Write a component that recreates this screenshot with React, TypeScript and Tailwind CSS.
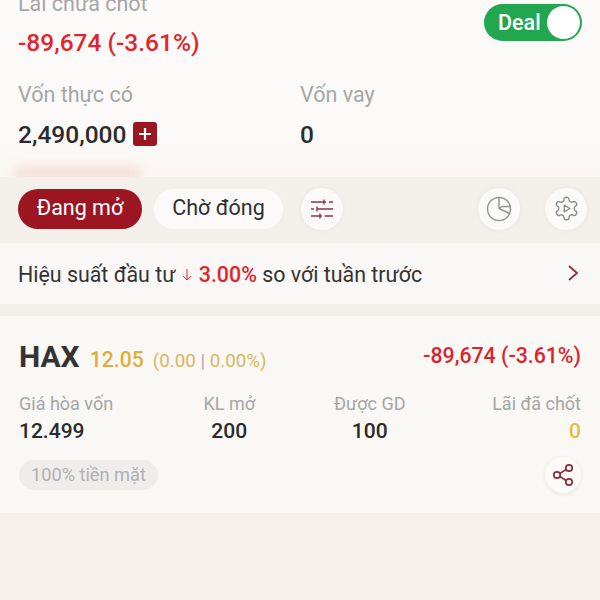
import React from "react";

function Circle({ children, className = "" }: { children: React.ReactNode; className?: string }) {
  return (
    <div className={`w-[42px] h-[42px] rounded-full bg-[#fbfaf9] flex items-center justify-center shadow-[0_0_4px_rgba(120,100,90,0.08)] ${className}`}>
      {children}
    </div>
  );
}

function Stat({ label, value, align, valueClass = "text-[#2b2b2b]" }: { label: string; value: string; align: string; valueClass?: string }) {
  return (
    <div className={`flex flex-col ${align}`}>
      <span className="text-[18px] leading-[24px] text-[#a6a6a6]">{label}</span>
      <span className={`text-[21px] leading-[30px] font-medium ${valueClass}`}>{value}</span>
    </div>
  );
}

export default function App() {
  return (
    <div className="w-[600px] h-[600px] overflow-hidden bg-[#f5f0ea] font-['Roboto',sans-serif] text-[#2b2b2b]">
      <div className="relative h-[177px] bg-gradient-to-b from-[#fbfaf9] from-[75%] to-[#fbf6f2] px-[18px]">
        <div className="flex justify-between items-start">
          <div className="mt-[-8px]">
            <div className="text-[21.5px] leading-[24px] text-[#a6a6a6]">Lãi chưa chốt</div>
            <div className="mt-[11px] text-[24.5px] leading-[32px] font-medium text-[#e2242c]">-89,674 (-3.61%)</div>
          </div>
          <div className="mt-[4px] w-[98px] h-[37px] rounded-full bg-[#22a64f] flex items-center justify-between pl-[14px] pr-[2px]">
            <span className="text-[21.5px] font-medium text-white pt-[1px]">Deal</span>
            <span className="w-[33px] h-[33px] rounded-full bg-white" />
          </div>
        </div>
        <div className="mt-[22px] grid grid-cols-[282px_1fr]">
          <div>
            <div className="text-[21.5px] leading-[28px] text-[#a6a6a6]">Vốn thực có</div>
            <div className="mt-[10px] flex items-center gap-[7px]">
              <span className="text-[24.5px] leading-[32px] font-medium text-[#2b2b2b]">2,490,000</span>
              <span className="w-[24px] h-[24px] rounded-[3px] bg-[#9c1622] flex items-center justify-center mb-[3px]">
                <svg width="14" height="14" viewBox="0 0 14 14"><path d="M7 1v12M1 7h12" stroke="#fff" strokeWidth="2.2" /></svg>
              </span>
            </div>
          </div>
          <div>
            <div className="text-[21.5px] leading-[28px] text-[#a6a6a6]">Vốn vay</div>
            <div className="mt-[10px] text-[24.5px] leading-[32px] font-medium text-[#2b2b2b]">0</div>
          </div>
        </div>
        <div className="absolute left-[15px] top-[168px] w-[125px] h-[10px] bg-[#e3a9a9] opacity-40 blur-[6px]" />
      </div>

      <div className="relative h-[66px] bg-[#f3efeb] flex items-center pl-[18px] pr-[13px] pb-[3px]">
        <div className="w-[124px] h-[40px] rounded-full bg-[#9c1622] text-white text-[21.5px] flex items-center justify-center">Đang mở</div>
        <div className="ml-[12px] w-[129px] h-[40px] rounded-full bg-[#fbfaf9] text-[#2f2f2f] text-[21.5px] flex items-center justify-center">Chờ đóng</div>
        <Circle className="ml-[18px]">
          <svg width="24" height="22" viewBox="0 0 24 22" fill="none" stroke="#8f3246" strokeWidth="1.4">
            <path d="M1 4h15M14 1.500v5M19 4h4M1 11h3M7 8.500v5M7 11h16M1 18h11M10 15.500v5M15 18h8" />
          </svg>
        </Circle>
        <Circle className="ml-auto">
          <svg width="26" height="26" viewBox="0 0 26 26" fill="none" stroke="#949494" strokeWidth="1.4" strokeLinejoin="round">
            <circle cx="13" cy="13" r="11.500" />
            <path d="M13 1.500 13 12.500 23.500 17.500M13 12.500 16 10.500 24.300 10.500" />
          </svg>
        </Circle>
        <Circle className="ml-[25px]">
          <svg width="27" height="27" viewBox="0 0 24 24" fill="none" stroke="#8a8a8a" strokeWidth="1.200" strokeLinejoin="round">
            <path d="M12.220 2h-.44a2 2 0 0 0-2 2v.18a2 2 0 0 1-1 1.730l-.43.25a2 2 0 0 1-2 0l-.15-.08a2 2 0 0 0-2.730.73l-.22.38a2 2 0 0 0 .73 2.730l.15.1a2 2 0 0 1 1 1.720v.51a2 2 0 0 1-1 1.740l-.15.09a2 2 0 0 0-.73 2.730l.22.38a2 2 0 0 0 2.730.73l.15-.08a2 2 0 0 1 2 0l.43.25a2 2 0 0 1 1 1.730V20a2 2 0 0 0 2 2h.44a2 2 0 0 0 2-2v-.18a2 2 0 0 1 1-1.730l.43-.25a2 2 0 0 1 2 0l.15.08a2 2 0 0 0 2.730-.73l.22-.39a2 2 0 0 0-.73-2.730l-.15-.08a2 2 0 0 1-1-1.740v-.5a2 2 0 0 1 1-1.740l.15-.09a2 2 0 0 0 .73-2.730l-.22-.38a2 2 0 0 0-2.730-.73l-.15.08a2 2 0 0 1-2 0l-.43-.25a2 2 0 0 1-1-1.730V4a2 2 0 0 0-2-2z" />
            <path d="M10 9v6l5-3Z" />
          </svg>
        </Circle>
      </div>

      <div className="h-[61px] bg-[#faf8f6] flex items-center justify-between pl-[18px] pr-[21px]">
        <div className="text-[21.4px] text-[#333] flex items-center whitespace-pre pt-[3px]">
          <span>Hiệu suất đầu tư </span>
          <svg width="12" height="14" viewBox="0 0 12 14" fill="none" stroke="#e2242c" strokeWidth="1" className="mr-[6px]">
            <path d="M6 1v11M2 8l4 4 4-4" />
          </svg>
          <span className="font-medium text-[#e2242c]">3.00%</span>
          <span> so với tuần trước</span>
        </div>
        <svg width="12" height="18" viewBox="0 0 12 18" fill="none" stroke="#8f2a3c" strokeWidth="1.8" className="mb-[2px]"><path d="M2 2l8 7-8 7" /></svg>
      </div>

      <div className="h-[12px] bg-[#f3f0ec]" />

      <div className="h-[197px] bg-[#f9f8f4] px-[19px] pt-[22px]">
        <div className="flex items-center justify-between h-[36px]">
          <div className="flex items-baseline">
            <span className="text-[30px] font-bold text-[#333]">HAX</span>
            <span className="ml-[10px] text-[21.200px] font-medium text-[#e0ae3c]">12.05</span>
            <span className="ml-[9px] text-[18.800px] text-[#dcb560]">(0.00 <span className="text-[#aaa]">|</span> 0.00%)</span>
          </div>
          <span className="text-[21.300px] font-medium text-[#d9242f]">-89,674 (-3.61%)</span>
        </div>
        <div className="mt-[18px] grid grid-cols-4">
          <Stat label="Giá hòa vốn" value="12.499" align="items-start" />
          <div className="flex justify-start pl-[44px]"><Stat label="KL mở" value="200" align="items-center" /></div>
          <div className="flex justify-start pl-[34px]"><Stat label="Được GD" value="100" align="items-center" /></div>
          <Stat label="Lãi đã chốt" value="0" align="items-end" valueClass="text-[#e5bd3f]" />
        </div>
        <div className="mt-[11px] flex items-center justify-between">
          <span className="h-[30px] px-[12px] rounded-full bg-[#efedeb] text-[18.200px] text-[#b0b0b0] flex items-center">100% tiền mặt</span>
          <div className="w-[36px] h-[36px] rounded-full bg-[#fbfaf9] flex items-center justify-center shadow-[0_1px_4px_rgba(90,70,60,0.12)]">
            <svg width="24" height="24" viewBox="0 0 24 24" fill="none" stroke="#8a2a3a" strokeWidth="1.700">
              <circle cx="18" cy="5" r="3.200" /><circle cx="6" cy="12" r="3.200" /><circle cx="18" cy="19" r="3.200" />
              <path d="M8.800 10.400l6.400-3.800M8.800 13.600l6.400 3.800" />
            </svg>
          </div>
        </div>
      </div>
    </div>
  );
}
